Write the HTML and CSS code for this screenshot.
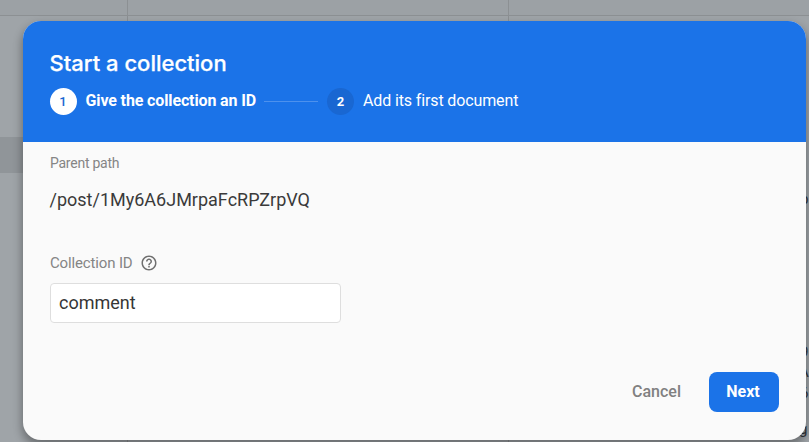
FILE: index.html
```html
<!DOCTYPE html>
<html lang="en">
<head>
<meta charset="utf-8">
<title>Start a collection</title>
<link rel="stylesheet" href="styles.css">
</head>
<body>
<div class="backdrop" aria-hidden="true">
  <div class="toolbar"><span></span><span></span><span></span></div>
  <div class="panels"><div class="panel first"><div class="selected"></div></div><div class="panel"></div><div class="panel last"></div></div>
  <div class="fragments"><span>p</span><span>9</span><span>A</span><span>6</span><span>g</span></div>
</div>
<main class="dialog">
  <header class="header">
    <h1 class="title">Start a collection</h1>
    <div class="steps">
      <span class="number active">1</span><span class="step current">Give the collection an ID</span>
      <span class="connector"></span>
      <span class="number">2</span><span class="step">Add its first document</span>
    </div>
  </header>
  <section class="content">
    <div class="label parent">Parent path</div>
    <div class="path">/post/1My6A6JMrpaFcRPZrpVQ</div>
    <label class="label collection" for="collection-id"><span>Collection ID</span>
      <svg class="help" viewBox="0 0 24 24"><path d="M11 18h2v-2h-2v2zm1-16C6.48 2 2 6.48 2 12s4.48 10 10 10 10-4.48 10-10S17.52 2 12 2zm0 18c-4.41 0-8-3.59-8-8s3.59-8 8-8 8 3.59 8 8-3.59 8-8 8zm0-14c-2.21 0-4 1.79-4 4h2c0-1.1.9-2 2-2s2 .9 2 2c0 2-3 1.75-3 5h2c0-2.25 3-2.5 3-5 0-2.21-1.79-4-4-4z"/></svg>
    </label>
    <input class="field" id="collection-id" value="comment">
    <footer class="actions"><button class="cancel">Cancel</button><button class="next">Next</button></footer>
  </section>
</main>
</body>
</html>
```
FILE: styles.css
```css
* { box-sizing: border-box; }
body { margin: 0; width: 809px; height: 442px; overflow: hidden; font-family: Roboto, sans-serif; background: #9fa4a8; }
.backdrop { position: absolute; inset: 0; }
.toolbar, .panels { display: grid; grid-template-columns: 128px 381px 1fr; }
.toolbar { height: 16px; border-bottom: 1px solid #8c9093; background: #9ca1a5; }
.toolbar span, .panel { border-right: 1px solid #8c9093; }
.toolbar span:last-child, .last { border-right: 0; }
.panels { height: 426px; }
.first { padding-top: 121px; }
.selected { height: 36px; background: #909599; }
.fragments span { position: absolute; left: 800px; top: 190px; font-size: 15px; line-height: 18px; color: #303338; }
.fragments span:nth-child(2) { top: 343px; }
.fragments span:nth-child(3) { top: 363px; left: 799px; }
.fragments span:nth-child(4) { top: 384px; }
.fragments span:nth-child(5) { top: 420px; left: 799px; }
.dialog { position: absolute; left: 23px; top: 21px; width: 783px; height: 419px; display: flex; flex-direction: column; border-radius: 18px; overflow: hidden; background: #fafafa; box-shadow: 0 5px 10px 1px #0005; }
.header { height: 121px; padding: 28px 27px 0 26.5px; background: #1b73e8; color: #fff; }
.title { margin: 0; font: 500 22px/28px Inter, sans-serif; letter-spacing: 0; -webkit-text-stroke: .25px #fff; }
.steps { display: flex; align-items: center; height: 27px; margin-top: 11px; }
.number { flex: none; width: 27px; height: 27px; border-radius: 50%; text-align: center; font-size: 13px; font-weight: 700; line-height: 27px; background: #1967d2; }
.number.active { background: #fff; color: #1967d2; font-weight: 500; }
.step { position: relative; top: -1px; margin-left: 9px; white-space: nowrap; font-size: 16px; line-height: 24px; letter-spacing: -.13px; }
.current { font-weight: 700; }
.connector { width: 54px; height: 1px; margin: 0 9px 0 8px; background: #4d91ed; }
.content { flex: 1; display: flex; flex-direction: column; padding: 12px 27px 28px; }
.label { color: #858585; }
.parent { font-size: 14px; line-height: 18px; letter-spacing: -.25px; }
.path { margin: 16px 0 0 -.5px; font-size: 18px; line-height: 24px; color: #3a3a3a; }
.collection { display: flex; align-items: center; gap: 7px; height: 20px; margin-top: 41px; font-size: 15px; letter-spacing: -.15px; }
.help { width: 18px; height: 18px; fill: #6f6f6f; }
.field { width: 291px; height: 40px; margin-top: 10px; padding: 0 8px 2px; border: 1px solid #dedede; border-radius: 4px; background: #fff; font: 400 18px/24px Roboto, sans-serif; color: #363636; }
.actions { display: flex; justify-content: flex-end; gap: 16px; margin-top: auto; }
button { height: 40px; border: 0; border-radius: 8px; padding: 0; font: 500 16px/20px Roboto, sans-serif; }
.cancel { width: 73px; background: transparent; color: #808080; }
.next { width: 70px; padding-right: 2px; background: #1b73e8; color: #fff; font-weight: 700; }
```
